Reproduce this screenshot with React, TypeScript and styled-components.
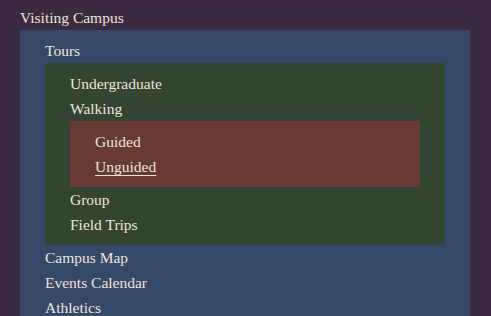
import React from "react";
import styled, { createGlobalStyle } from "styled-components";

type Item = { label: string; underline?: boolean; children?: Item[] };

const GlobalStyle = createGlobalStyle`
  html, body {
    margin: 0;
    padding: 0;
    background: #3b2b41;
  }
`;

const Page = styled.div`
  min-height: 316px;
  padding: 5px 21px 0 20px;
  box-sizing: border-box;
  font-family: "Liberation Serif", "Times New Roman", serif;
  font-size: 15.5px;
  color: #ece4d8;
`;

const levelColors = ["transparent", "#364868", "#334433", "#673a35"];

const List = styled.ul<{ $level: number }>`
  list-style: none;
  margin: 0;
  padding: ${(p) => (p.$level === 0 ? "0" : "8px 25px")};
  background: ${(p) => levelColors[p.$level] || "transparent"};
`;

const Row = styled.li``;

const Label = styled.a<{ $underline?: boolean }>`
  display: block;
  height: 25px;
  line-height: 25px;
  color: inherit;
  text-decoration: ${(p) => (p.$underline ? "underline" : "none")};
  text-underline-offset: 3px;
`;

const menu: Item[] = [
  {
    label: "Visiting Campus",
    children: [
      {
        label: "Tours",
        children: [
          { label: "Undergraduate" },
          {
            label: "Walking",
            children: [{ label: "Guided" }, { label: "Unguided", underline: true }],
          },
          { label: "Group" },
          { label: "Field Trips" },
        ],
      },
      { label: "Campus Map" },
      { label: "Events Calendar" },
      { label: "Athletics" },
    ],
  },
];

const Menu = ({ items, level }: { items: Item[]; level: number }) => (
  <List $level={level}>
    {items.map((item) => (
      <Row key={item.label}>
        <Label $underline={item.underline}>{item.label}</Label>
        {item.children && <Menu items={item.children} level={level + 1} />}
      </Row>
    ))}
  </List>
);

export default function App() {
  return (
    <Page>
      <GlobalStyle />
      <Menu items={menu} level={0} />
    </Page>
  );
}
